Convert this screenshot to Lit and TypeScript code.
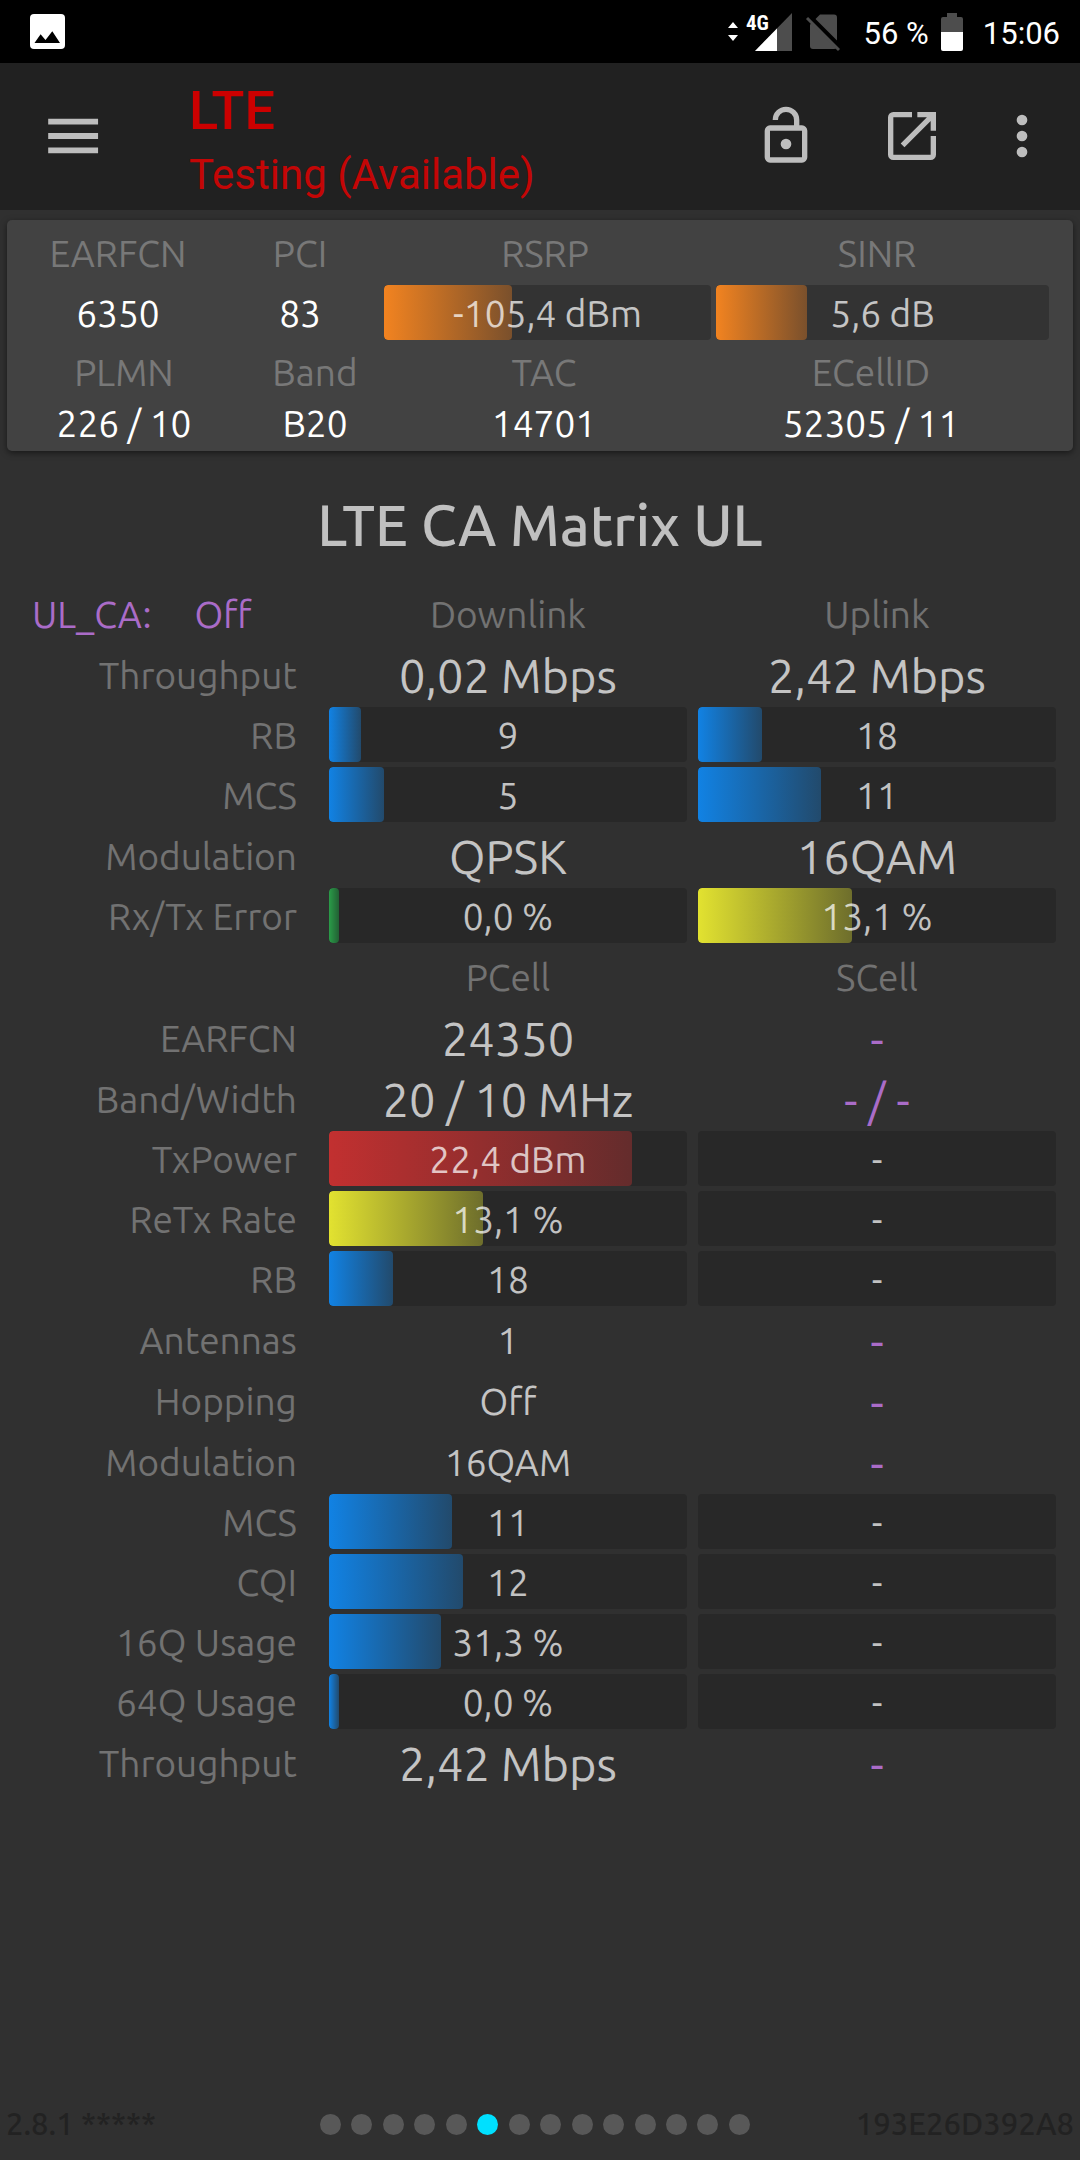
import { LitElement, html, css, nothing, TemplateResult } from "lit";
import { customElement, property } from "lit/decorators.js";
import { classMap } from "lit/directives/class-map.js";
import { styleMap } from "lit/directives/style-map.js";

type Tone = "blue" | "orange" | "green" | "yellow" | "red";

interface Cell {
  text: string;
  kind?: "bar" | "large" | "small" | "empty";
  tone?: Tone;
  fill?: number;
}

interface Row {
  label: string;
  cells: [Cell, Cell];
}

const bar = (text: string, tone: Tone, fill: number): Cell => ({ text, kind: "bar", tone, fill });
const large = (text: string): Cell => ({ text, kind: "large" });
const small = (text: string): Cell => ({ text, kind: "small" });
const empty = (text = "-"): Cell => ({ text, kind: "empty" });
const emptyBar: Cell = { text: "-", kind: "bar" };

const LINK_ROWS: Row[] = [
  { label: "Throughput", cells: [large("0,02 Mbps"), large("2,42 Mbps")] },
  { label: "RB", cells: [bar("9", "blue", 9), bar("18", "blue", 18)] },
  { label: "MCS", cells: [bar("5", "blue", 15.5), bar("11", "blue", 34.4)] },
  { label: "Modulation", cells: [large("QPSK"), large("16QAM")] },
  { label: "Rx/Tx Error", cells: [bar("0,0 %", "green", 2.8), bar("13,1 %", "yellow", 43)] },
];

const CELL_ROWS: Row[] = [
  { label: "EARFCN", cells: [large("24350"), empty()] },
  { label: "Band/Width", cells: [large("20 / 10 MHz"), empty("- / -")] },
  { label: "TxPower", cells: [bar("22,4 dBm", "red", 84.7), emptyBar] },
  { label: "ReTx Rate", cells: [bar("13,1 %", "yellow", 43), emptyBar] },
  { label: "RB", cells: [bar("18", "blue", 18), emptyBar] },
  { label: "Antennas", cells: [small("1"), empty()] },
  { label: "Hopping", cells: [small("Off"), empty()] },
  { label: "Modulation", cells: [small("16QAM"), empty()] },
  { label: "MCS", cells: [bar("11", "blue", 34.4), emptyBar] },
  { label: "CQI", cells: [bar("12", "blue", 37.4), emptyBar] },
  { label: "16Q Usage", cells: [bar("31,3 %", "blue", 31.3), emptyBar] },
  { label: "64Q Usage", cells: [bar("0,0 %", "blue", 2.8), emptyBar] },
  { label: "Throughput", cells: [large("2,42 Mbps"), empty()] },
];

/** A labelled bar whose coloured part shows how far the value reaches. */
@customElement("value-bar")
export class ValueBar extends LitElement {
  @property() text = "";
  @property() tone?: Tone;
  @property({ type: Number }) fill = 0;

  static styles = css`
    :host {
      display: block;
    }
    .track {
      display: grid;
      height: 55px;
      border-radius: 4px;
      overflow: hidden;
      background: var(--track, #282828);
    }
    .fill,
    .text {
      grid-area: 1 / 1;
    }
    .fill {
      height: 55px;
      border-radius: 4px;
    }
    .text {
      text-align: center;
      font-size: 37px;
      line-height: 57px;
      color: rgba(255, 255, 255, 0.72);
      z-index: 1;
    }
    .blue {
      background: linear-gradient(90deg, #1182e4, #224a6c);
    }
    .orange {
      background: linear-gradient(90deg, #f28320, #7a502c);
    }
    .green {
      background: linear-gradient(90deg, #2a9c48, #226034);
    }
    .yellow {
      background: linear-gradient(90deg, #e2e230, #6e6e2c);
    }
    .red {
      background: linear-gradient(90deg, #c23030, #642c2c);
    }
  `;

  render() {
    return html`<div class="track">
      ${this.tone
        ? html`<span
            class=${classMap({ fill: true, [this.tone]: true })}
            style=${styleMap({ width: `${this.fill}%` })}
          ></span>`
        : nothing}
      <span class="text">${this.text}</span>
    </div>`;
  }
}

@customElement("status-bar")
export class StatusBar extends LitElement {
  static styles = css`
    :host {
      display: flex;
      align-items: center;
      height: 63px;
      padding: 0 20px 0 30px;
      background: #000;
      color: #fff;
      font: 31px/36px Roboto, "Liberation Sans", sans-serif;
    }
    svg {
      display: block;
      flex: none;
    }
    .spacer {
      flex: 1;
    }
    .percent {
      margin: 4px 12px 0 24px;
    }
    .time {
      margin: 4px 0 0 20px;
    }
    .network {
      font: bold 21px "Roboto Condensed", "Liberation Sans Narrow", Roboto, sans-serif;
    }
  `;

  render() {
    return html`
      <svg width="35" height="35" viewBox="30 14 35 35" aria-hidden="true">
        <rect x="30" y="14" width="35" height="35" rx="4" fill="#fff" />
        <path d="M34.5 43L40.6 34.3L45.5 40L52.3 31.3L60 43Z" fill="#000" />
      </svg>
      <span class="spacer"></span>
      <svg width="112" height="40" viewBox="728 12 112 40" aria-hidden="true">
        <path d="M728 28L733 22L738 28ZM728 35H738L733 41Z" fill="#fff" />
        <path d="M755 51L792 13V51Z" fill="#4d4d4d" />
        <path d="M755 51L777 28.4V51Z" fill="#fff" />
        <text class="network" x="746" y="30" fill="#fff">4G</text>
        <path
          d="M820 14.5H834A3 3 0 0 1 837 17.5V46A3 3 0 0 1 834 49H813A3 3 0 0 1 810 46V24.5Z"
          fill="#4d4d4d"
        />
        <path d="M809 16L841 48" stroke="#000" stroke-width="5" />
        <path d="M807 18L839 50" stroke="#4d4d4d" stroke-width="3" />
      </svg>
      <span class="percent">56 %</span>
      <svg width="22" height="38" viewBox="0 0 22 38" aria-hidden="true">
        <path d="M6 0H16V4H20A2 2 0 0 1 22 6V19H0V6A2 2 0 0 1 2 4H6Z" fill="#4d4d4d" />
        <path d="M0 19H22V36A2 2 0 0 1 20 38H2A2 2 0 0 1 0 36Z" fill="#fff" />
      </svg>
      <span class="time">15:06</span>
    `;
  }
}

@customElement("app-bar")
export class AppBar extends LitElement {
  static styles = css`
    :host {
      display: flex;
      align-items: center;
      box-sizing: border-box;
      height: 147px;
      padding: 0 11px 2px 41px;
      background: #212121;
      font-family: Roboto, "Liberation Sans", sans-serif;
    }
    button {
      display: flex;
      align-items: center;
      justify-content: center;
      height: 96px;
      padding: 0;
      border: 0;
      background: none;
      color: #bdbdbd;
    }
    svg {
      width: 64px;
      height: 64px;
      fill: currentColor;
    }
    .menu {
      width: 64px;
    }
    .action {
      width: 126px;
    }
    .more {
      width: 94px;
    }
    .titles {
      flex: 1;
      margin: 15px 0 0 84px;
    }
    h1,
    p {
      margin: 0;
      color: #cc0000;
      line-height: 64px;
    }
    h1 {
      font-size: 54px;
      font-weight: 500;
    }
    p {
      font-size: 42px;
      color: #c40606;
    }
  `;

  private icon(path: string) {
    return html`<svg viewBox="0 0 24 24" aria-hidden="true"><path d=${path} /></svg>`;
  }

  render() {
    return html`
      <button class="menu" aria-label="Menu">
        ${this.icon("M2.7 5.5H21.4V7.7H2.7ZM2.7 10.9H21.4V13.1H2.7ZM2.7 16.3H21.4V18.5H2.7Z")}
      </button>
      <div class="titles">
        <h1>LTE</h1>
        <p>Testing (Available)</p>
      </div>
      <button class="action" aria-label="Unlock">
        ${this.icon(
          "M18 20V10H6V20H18M18 8A2 2 0 0 1 20 10V20A2 2 0 0 1 18 22H6A2 2 0 0 1 4 20V10A2 2 0 0 1 6 8H15V6A3 3 0 0 0 9 6H7A5 5 0 0 1 17 6V8H18M12 17A2 2 0 1 1 12 13A2 2 0 0 1 12 17Z",
        )}
      </button>
      <button class="action" aria-label="Open in new window">
        ${this.icon(
          "M14 3V5H17.59L7.76 14.83L9.17 16.24L19 6.41V10H21V3M19 19H5V5H12V3H5A2 2 0 0 0 3 5V19A2 2 0 0 0 5 21H19A2 2 0 0 0 21 19V12H19V19Z",
        )}
      </button>
      <button class="more" aria-label="More options">
        ${this.icon(
          "M12 16A2 2 0 1 1 12 20A2 2 0 0 1 12 16M12 10A2 2 0 1 1 12 14A2 2 0 0 1 12 10M12 4A2 2 0 1 1 12 8A2 2 0 0 1 12 4Z",
        )}
      </button>
    `;
  }
}

@customElement("cell-card")
export class CellCard extends LitElement {
  static styles = css`
    :host {
      display: block;
      margin: 10px 7px 0;
      padding: 4px 0 2px;
      border-radius: 5px;
      background: #424242;
      box-shadow: 0 2px 6px rgba(0, 0, 0, 0.5);
      font-size: 37px;
      line-height: 50px;
      text-align: center;
      color: #fff;
      --track: #333;
    }
    .row {
      display: grid;
    }
    .signal-labels {
      grid-template-columns: 222fr 142fr 348fr 316fr 38fr;
      line-height: 59px;
      padding-bottom: 2px;
    }
    .signal-values {
      grid-template-columns: 222fr 142fr 702fr;
      height: 55px;
      line-height: 57px;
    }
    .cell-info {
      grid-template-columns: 234fr 148fr 310fr 344fr 30fr;
      row-gap: 1px;
    }
    .label {
      color: #787878;
    }
    .bars {
      display: grid;
      grid-template-columns: 327fr 333fr;
      gap: 5px;
      padding: 0 24px 0 13px;
    }
    .cell-info .label {
      padding-top: 8px;
    }
  `;

  render() {
    return html`
      <div class="row signal-labels label">
        <span>EARFCN</span><span>PCI</span><span>RSRP</span><span>SINR</span>
      </div>
      <div class="row signal-values">
        <span>6350</span><span>83</span>
        <div class="bars">
          <value-bar text="-105,4 dBm" tone="orange" fill="39.2"></value-bar>
          <value-bar text="5,6 dB" tone="orange" fill="27.3"></value-bar>
        </div>
      </div>
      <div class="row cell-info">
        <span class="label">PLMN</span><span class="label">Band</span>
        <span class="label">TAC</span><span class="label">ECellID</span><span></span>
        <span>226 / 10</span><span>B20</span><span>14701</span><span>52305 / 11</span>
      </div>
    `;
  }
}

@customElement("ca-matrix")
export class CaMatrix extends LitElement {
  static styles = css`
    :host {
      display: block;
      padding: 37px 18px 0 0;
    }
    h2 {
      margin: 0 0 20px 18px;
      font-size: 57px;
      font-weight: 500;
      line-height: 74px;
      text-align: center;
      color: #c0c0c0;
    }
    table {
      width: 100%;
      table-layout: fixed;
      border-collapse: collapse;
    }
    .label-col {
      width: 30.5%;
    }
    th,
    td {
      box-sizing: border-box;
      height: 61px;
      padding: 3px 6px 0 5px;
      font-size: 37px;
      font-weight: 400;
      line-height: 55px;
      text-align: center;
    }
    .bar th,
    .bar td {
      height: 60px;
    }
    .bar td {
      padding-top: 0;
    }
    th {
      color: #727272;
    }
    .label {
      padding-right: 27px;
      text-align: right;
    }
    td {
      color: rgba(255, 255, 255, 0.72);
    }
    .large-text,
    .empty-text {
      font-size: 47px;
    }
    .empty-text {
      color: #aa6cc8;
    }
    .mode {
      display: flex;
      gap: 43px;
      padding-left: 27px;
      color: #aa6cc8;
    }
  `;

  private cell(c: Cell): TemplateResult {
    return c.kind === "bar"
      ? html`<td><value-bar .text=${c.text} .tone=${c.tone} .fill=${c.fill ?? 0}></value-bar></td>`
      : html`<td class="${c.kind ?? "small"}-text">${c.text}</td>`;
  }

  private row(r: Row): TemplateResult {
    return html`<tr class=${r.cells[0].kind ?? "small"}>
      <th class="label" scope="row">${r.label}</th>
      ${r.cells.map((c) => this.cell(c))}
    </tr>`;
  }

  render() {
    return html`
      <h2>LTE CA Matrix UL</h2>
      <table>
        <colgroup>
          <col class="label-col" />
          <col />
          <col />
        </colgroup>
        <tbody>
          <tr>
            <th><div class="mode"><span>UL_CA:</span><span>Off</span></div></th>
            <th scope="col">Downlink</th>
            <th scope="col">Uplink</th>
          </tr>
          ${LINK_ROWS.map((r) => this.row(r))}
        </tbody>
        <tbody>
          <tr>
            <td></td>
            <th scope="col">PCell</th>
            <th scope="col">SCell</th>
          </tr>
          ${CELL_ROWS.map((r) => this.row(r))}
        </tbody>
      </table>
    `;
  }
}

@customElement("page-footer")
export class PageFooter extends LitElement {
  @property({ type: Number }) pages = 14;
  @property({ type: Number }) current = 5;

  static styles = css`
    :host {
      display: grid;
      grid-template-columns: 314fr 430px 324fr;
      align-items: center;
      padding: 0 6px 14px;
      font-size: 31px;
      font-weight: 500;
      line-height: 44px;
      color: #222;
    }
    .dots {
      display: flex;
      justify-content: space-between;
    }
    .dot {
      width: 21px;
      height: 21px;
      border-radius: 50%;
      background: #585858;
    }
    .current {
      background: #00e0ff;
    }
    .device {
      text-align: right;
    }
  `;

  render() {
    return html`
      <span>2.8.1 *****</span>
      <div class="dots">
        ${Array.from(
          { length: this.pages },
          (_, i) => html`<span class=${classMap({ dot: true, current: i === this.current })}></span>`,
        )}
      </div>
      <span class="device">193E26D392A8</span>
    `;
  }
}

@customElement("app-root")
export class AppRoot extends LitElement {
  static styles = css`
    :host {
      display: flex;
      flex-direction: column;
      min-height: 100vh;
      background: #303030;
      font-family: Ubuntu, "Open Sans", "Noto Sans", sans-serif;
    }
    .footer {
      margin-top: auto;
    }
  `;

  render() {
    return html`
      <status-bar></status-bar>
      <app-bar></app-bar>
      <cell-card></cell-card>
      <ca-matrix></ca-matrix>
      <page-footer class="footer"></page-footer>
    `;
  }
}
